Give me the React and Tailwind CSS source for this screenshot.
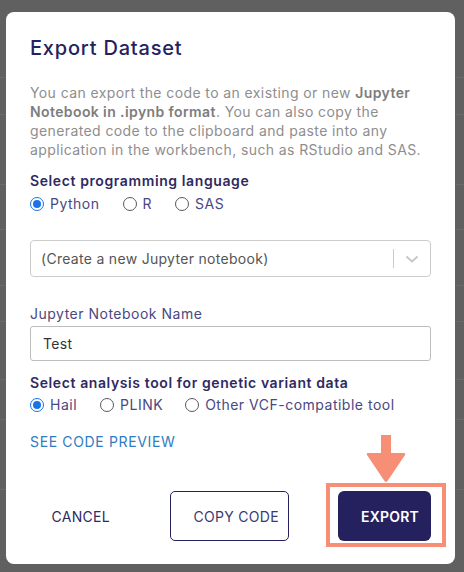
import React from "react";

function Radio({ checked, label, className = "" }) {
  return (
    <label className={"flex items-center gap-[6px] " + className}>
      {checked ? (
        <span className="flex h-[14px] w-[14px] items-center justify-center rounded-full border-[1.5px] border-[#1a73e8]">
          <span className="h-[8px] w-[8px] rounded-full bg-[#1a73e8]" />
        </span>
      ) : (
        <span className="h-[14px] w-[14px] rounded-full border-[1.3px] border-[#5a5a5a]" />
      )}
      <span className="text-[14px] leading-[20px] tracking-[0.5px] text-[#4a4880]">{label}</span>
    </label>
  );
}

export default function App() {
  const rows = [78, 37, 70, 45, 56, 36, 58, 40, 70];
  return (
    <div
      className="relative h-[572px] w-[464px] overflow-hidden bg-[#606060]"
      style={{ fontFamily: "Inter, 'Open Sans', sans-serif" }}
    >
      <div className="absolute inset-0 flex flex-col">
        {rows.map((h, i) => (
          <div key={i} className="border-b border-[#6a6a6a]" style={{ height: h }} />
        ))}
      </div>

      <div className="relative ml-[6px] mt-[12px] w-[449px] rounded-[8px] bg-white px-[24px] pb-[23px] pt-[22px]">
        <h1 className="text-[20px] font-medium leading-[28px] tracking-[0.8px] text-[#25215e]">Export Dataset</h1>

        <p className="mt-[21px] whitespace-nowrap text-[14px] leading-[19px] tracking-[0.4px] text-[#8e8e8e]">
          <span className="block">
            You can export the code to an existing or new <b className="font-semibold text-[#7d7d7d]">Jupyter</b>
          </span>
          <span className="block">
            <b className="font-semibold text-[#7d7d7d]">Notebook in .ipynb format</b>. You can also copy the
          </span>
          <span className="block">generated code to the clipboard and paste into any</span>
          <span className="block">application in the workbench, such as RStudio and SAS.</span>
        </p>

        <div className="mt-[12px] text-[14px] font-semibold leading-[20px] tracking-[0.6px] text-[#2e2a5f]">
          Select programming language
        </div>
        <div className="mt-[3px] flex items-center">
          <Radio checked label="Python" />
          <Radio label="R" className="ml-[23px]" />
          <Radio label="SAS" className="ml-[23px]" />
        </div>

        <div className="mt-[26px] flex h-[37px] items-center rounded-[4px] border border-[#cccccc] pl-[10px]">
          <span className="flex-1 text-[14px] tracking-[0.3px] text-[#555555]">(Create a new Jupyter notebook)</span>
          <span className="h-[19px] w-px bg-[#cccccc]" />
          <span className="flex w-[36px] items-center justify-center">
            <svg width="14" height="10" viewBox="0 0 14 10" fill="none">
              <path d="M2 3 L7 7.5 L12 3" stroke="#c8c8c8" strokeWidth="2" strokeLinecap="round" strokeLinejoin="round" />
            </svg>
          </span>
        </div>

        <div className="mt-[27px] text-[14px] leading-[20px] tracking-[0.5px] text-[#4a4880]">Jupyter Notebook Name</div>
        <div className="mt-[2px] flex h-[35px] items-center rounded-[3px] border border-[#bdbdbd] pl-[12px] text-[14px] tracking-[0.3px] text-[#333333]">
          Test
        </div>

        <div className="mt-[12px] text-[14px] font-semibold leading-[20px] tracking-[0.6px] text-[#2e2a5f]">
          Select analysis tool for genetic variant data
        </div>
        <div className="mt-[2px] flex items-center">
          <Radio checked label="Hail" />
          <Radio label="PLINK" className="ml-[23px]" />
          <Radio label="Other VCF-compatible tool" className="ml-[22px]" />
        </div>

        <div className="mt-[17px] text-[14px] leading-[20px] tracking-[0.65px] text-[#2f7cc0]">SEE CODE PREVIEW</div>

        <div className="mt-[39px] flex h-[50px] items-center">
          <button className="flex h-[50px] w-[102px] items-center justify-center text-[14px] tracking-[0.3px] text-[#2e2a5f]">
            CANCEL
          </button>
          <button className="ml-[39px] flex h-[50px] w-[119px] items-center rounded-[5px] border border-[#25215e] pl-[22px] text-[14px] tracking-[0.3px] text-[#3c3a70]">
            COPY CODE
          </button>
          <div className="relative ml-[49px]">
            <div className="pointer-events-none absolute -left-[12px] -right-[15px] -top-[8px] -bottom-[6px] border-[4px] border-[#f68f75]" />
            <svg className="absolute -top-[56px] left-[27px]" width="42" height="49" viewBox="0 0 42 49">
              <rect x="16" y="0" width="10" height="20" fill="#f68f75" />
              <path d="M3 18 L39 18 Q41 18 40 20 L22.5 46 Q21 48 19.5 46 L2 20 Q1 18 3 18 Z" fill="#f68f75" />
            </svg>
            <button className="flex h-[50px] w-[93px] items-center rounded-[6px] bg-[#25215e] pl-[23px] text-[14px] font-semibold tracking-[0.2px] text-white">
              EXPORT
            </button>
          </div>
        </div>
      </div>
    </div>
  );
}
